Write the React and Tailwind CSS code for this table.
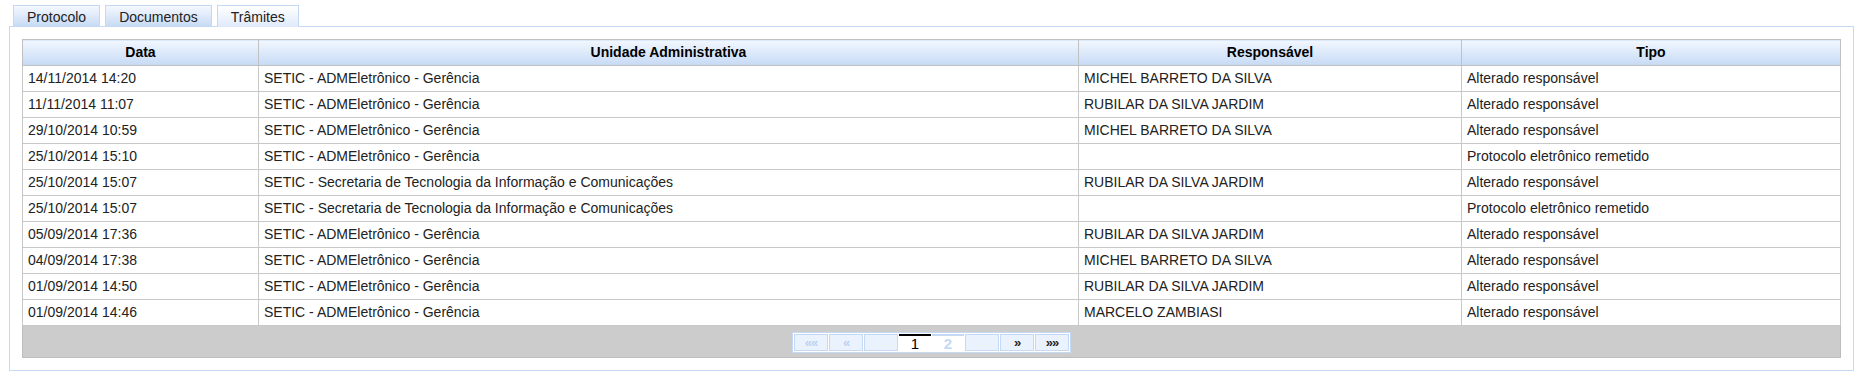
import React from 'react';

const rows = [
  ['14/11/2014 14:20', 'SETIC - ADMEletrônico - Gerência', 'MICHEL BARRETO DA SILVA', 'Alterado responsável'],
  ['11/11/2014 11:07', 'SETIC - ADMEletrônico - Gerência', 'RUBILAR DA SILVA JARDIM', 'Alterado responsável'],
  ['29/10/2014 10:59', 'SETIC - ADMEletrônico - Gerência', 'MICHEL BARRETO DA SILVA', 'Alterado responsável'],
  ['25/10/2014 15:10', 'SETIC - ADMEletrônico - Gerência', '', 'Protocolo eletrônico remetido'],
  ['25/10/2014 15:07', 'SETIC - Secretaria de Tecnologia da Informação e Comunicações', 'RUBILAR DA SILVA JARDIM', 'Alterado responsável'],
  ['25/10/2014 15:07', 'SETIC - Secretaria de Tecnologia da Informação e Comunicações', '', 'Protocolo eletrônico remetido'],
  ['05/09/2014 17:36', 'SETIC - ADMEletrônico - Gerência', 'RUBILAR DA SILVA JARDIM', 'Alterado responsável'],
  ['04/09/2014 17:38', 'SETIC - ADMEletrônico - Gerência', 'MICHEL BARRETO DA SILVA', 'Alterado responsável'],
  ['01/09/2014 14:50', 'SETIC - ADMEletrônico - Gerência', 'RUBILAR DA SILVA JARDIM', 'Alterado responsável'],
  ['01/09/2014 14:46', 'SETIC - ADMEletrônico - Gerência', 'MARCELO ZAMBIASI', 'Alterado responsável'],
];

const headers = ['Data', 'Unidade Administrativa', 'Responsável', 'Tipo'];

function Tab({ label, active }) {
  if (active) {
    return (
      <div className="relative z-10 -mb-px h-[22px] px-[13px] pt-[2px] border border-b-0 border-[#c5d9f4] bg-linear-to-b from-white to-[#dfeafb] text-[#222] leading-[18px]">
        {label}
      </div>
    );
  }
  return (
    <div className="h-[21px] px-[13px] pt-[2px] border border-b-0 border-[#c5d9f4] bg-linear-to-b from-[#f4f8fe] to-[#c8dbf5] text-[#222] leading-[18px]">
      {label}
    </div>
  );
}

function PagerButton({ label, disabled }) {
  return (
    <div
      className={
        'w-[34px] h-[17px] border border-[#c5d9f4] bg-[#eaf2fd] flex items-center justify-center text-[13px] font-bold leading-none tracking-[-1px] ' +
        (disabled ? 'text-[#bcd1f0]' : 'text-[#222]')
      }
    >
      {label}
    </div>
  );
}

export default function App() {
  return (
    <div className="bg-white pt-[5px] pl-[9px] pr-[14px] pb-[12px] text-[14px] font-['Liberation_Sans',Arial,sans-serif]">
      <div className="flex items-end gap-[5px] ml-[4px]">
        <Tab label="Protocolo" />
        <Tab label="Documentos" />
        <Tab label="Trâmites" active />
      </div>
      <div className="border border-[#c5d9f4] p-[12px]">
        <table className="w-full table-fixed border-collapse">
          <colgroup>
            <col className="w-[236px]" />
            <col className="w-[820px]" />
            <col className="w-[383px]" />
            <col />
          </colgroup>
          <thead>
            <tr>
              {headers.map((h) => (
                <th
                  key={h}
                  className="h-[26px] border border-[#c0c0c0] bg-linear-to-b from-[#f2f7fe] to-[#c6daf5] text-center font-bold text-black p-0"
                >
                  {h}
                </th>
              ))}
            </tr>
          </thead>
          <tbody>
            {rows.map((r, i) => (
              <tr key={i}>
                {r.map((c, j) => (
                  <td key={j} className="h-[26px] border border-[#c8c8c8] px-[5px] py-0 text-[#222] whitespace-nowrap overflow-hidden">
                    {c}
                  </td>
                ))}
              </tr>
            ))}
            <tr>
              <td colSpan={4} className="h-[32px] border border-[#bdbdbd] bg-[#cccccc] p-0">
                <div className="flex justify-center pt-[1px]">
                  <div className="flex gap-[1px] p-[1px] border border-[#c5d9f4] bg-white">
                    <PagerButton label="««" disabled />
                    <PagerButton label="«" disabled />
                    <PagerButton label="" />
                    <div className="w-[32px] h-[17px] border-t-2 border-black flex items-center justify-center text-[15px] text-black leading-none">
                      1
                    </div>
                    <div className="w-[32px] h-[17px] border-t-2 border-[#c5d9f4] flex items-center justify-center text-[15px] font-bold text-[#c5d9f4] leading-none">
                      2
                    </div>
                    <PagerButton label="" />
                    <PagerButton label="»" />
                    <PagerButton label="»»" />
                  </div>
                </div>
              </td>
            </tr>
          </tbody>
        </table>
      </div>
    </div>
  );
}
